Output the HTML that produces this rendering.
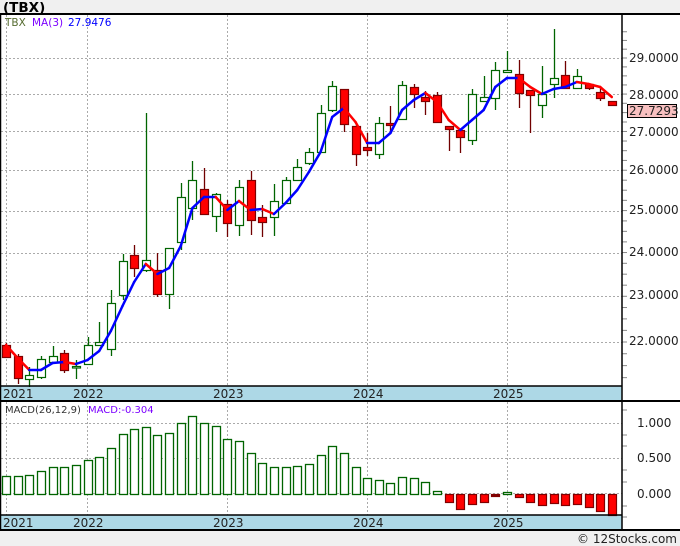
<!DOCTYPE html>
<html><head><meta charset="utf-8"><style>
html,body{margin:0;padding:0;background:#fff;width:680px;height:546px;overflow:hidden}
svg{display:block}
text{font-family:"DejaVu Sans","Liberation Sans",sans-serif;font-size:12px}
</style></head><body>
<svg id="s" width="680" height="546" viewBox="0 0 680 546" xmlns="http://www.w3.org/2000/svg">
<rect x="0" y="0" width="680" height="546" fill="#fff"/>
<rect x="0" y="0" width="680" height="14" fill="#f0f0f0"/>
<rect x="0" y="530" width="680" height="16" fill="#f0f0f0"/>
<g id="grid"></g>
<rect x="0" y="386" width="622" height="15" fill="#add8e6"/>
<rect x="0" y="515" width="622" height="15" fill="#add8e6"/>
<g id="plot"></g>
<line x1="0" y1="14" x2="680" y2="14" stroke="#000" stroke-width="2"/>
<line x1="0" y1="386" x2="622" y2="386" stroke="#000" stroke-width="1.5"/>
<line x1="0" y1="401" x2="680" y2="401" stroke="#000" stroke-width="2"/>
<line x1="0" y1="515" x2="622" y2="515" stroke="#000" stroke-width="1.5"/>
<line x1="0" y1="530" x2="680" y2="530" stroke="#000" stroke-width="2"/>
<line x1="0.5" y1="14" x2="0.5" y2="530" stroke="#000" stroke-width="1.5"/>
<line x1="622" y1="14" x2="622" y2="530" stroke="#000" stroke-width="1.5"/>
<text x="3" y="12" style="font-weight:bold;font-size:13.5px" fill="#000">(TBX)</text>
<text x="5" y="26" style="font-size:10.5px" fill="#556b2f">TBX</text>
<text x="32" y="26" style="font-size:10.5px" fill="#7b00ff">MA(3)</text>
<text x="68" y="26" style="font-size:10.5px" fill="#0000ff">27.9476</text>
<text x="5" y="413" style="font-size:10px" fill="#333">MACD(26,12,9)</text>
<text x="88" y="413" style="font-size:10px" fill="#7b00ff">MACD:-0.304</text>
<g fill="#222" style="font-size:12px">
<text x="629" y="62">29.0000</text>
<text x="629" y="99">28.0000</text>
<text x="629" y="174">26.0000</text>
<text x="629" y="214">25.0000</text>
<text x="629" y="256">24.0000</text>
<text x="629" y="299">23.0000</text>
<text x="629" y="345">22.0000</text>
<text x="637" y="427">1.000</text>
<text x="637" y="462">0.500</text>
<text x="637" y="498">0.000</text>
<text x="629" y="136">27.0000</text>
</g>
<rect x="627.5" y="104.5" width="49" height="13" fill="#f8c0c0" stroke="#000"/>
<text x="629" y="115" fill="#222" style="font-size:12px">27.7293</text>
<g fill="#222" style="font-size:12px">
<text x="3" y="398">2021</text><text x="73" y="398">2022</text><text x="213" y="398">2023</text><text x="353" y="398">2024</text><text x="493" y="398">2025</text>
<text x="3" y="527">2021</text><text x="73" y="527">2022</text><text x="213" y="527">2023</text><text x="353" y="527">2024</text><text x="493" y="527">2025</text>
</g>
<text x="677" y="543" text-anchor="end" fill="#222" style="font-size:12px">© 12Stocks.com</text>
</svg>
<script>
var NS="http://www.w3.org/2000/svg";
function el(p,t,a){var e=document.createElementNS(NS,t);for(var k in a)e.setAttribute(k,a[k]);p.appendChild(e);return e;}
var g=document.getElementById('grid'),p=document.getElementById('plot');
function Y(pr){return 58+1028*(Math.log(29)-Math.log(pr));}
[29,28,27,26,25,24,23,22].forEach(function(v){var y=Math.round(Y(v))+.5;el(g,'line',{x1:1,x2:622,y1:y,y2:y,stroke:'#aaa','stroke-dasharray':'2,2'});});
for(var v=21.25;v<=29.9;v+=0.25){var y=Y(v);if(y>16&&y<386)el(p,'line',{x1:622,x2:627,y1:y,y2:y,stroke:'#888'});}
[423,458,493].forEach(function(y){el(g,'line',{x1:1,x2:622,y1:y+.5,y2:y+.5,stroke:'#aaa','stroke-dasharray':'2,2'});});
[410,435,446,470,482,506,517].forEach(function(y){el(p,'line',{x1:622,x2:627,y1:y,y2:y,stroke:'#888'});});
[6,87,227,367,507].forEach(function(x){el(g,'line',{x1:x+.5,x2:x+.5,y1:15,y2:386,stroke:'#aaa','stroke-dasharray':'2,2'});el(g,'line',{x1:x+.5,x2:x+.5,y1:402,y2:515,stroke:'#aaa','stroke-dasharray':'2,2'});el(g,'line',{x1:x+.5,x2:x+.5,y1:386,y2:392,stroke:'#000'});el(g,'line',{x1:x+.5,x2:x+.5,y1:515,y2:521,stroke:'#000'});});
var C=[['r',345,357,343,358],['r',356,378,354,384],['g',375,379,367,387],['g',359,377,356,379],['g',356,362,346,364],['r',353,370,350,373],['g',366,367,360,379],['g',345,364,337,364],['g',342,345,322,346],['g',303,349,290,356],['g',261,295,254,300],['r',255,268,245,277],['g',260,270,113,272],['r',270,294,253,297],['g',248,294,248,309],['g',197,242,183,250],['g',180,208,161,220],['r',189,214,168,215],['g',194,216,193,232],['r',204,223,200,237],['g',187,225,180,236],['r',180,220,171,235],['r',217,222,205,237],['g',201,217,184,236],['g',180,203,177,203],['g',167,180,159,180],['g',152,163,148,165],['g',113,152,105,153],['g',86,110,81,112],['r',89,124,89,132],['r',126,154,125,166],['r',147,150,133,156],['g',123,154,117,159],['r',123,125,106,131],['g',85,119,81,120],['r',87,94,84,108],['r',97,101,91,115],['r',95,122,92,122],['r',126,129,126,151],['r',130,137,130,153],['g',94,140,89,145],['g',97,101,76,101],['g',70,98,62,110],['g',70,72,51,73],['r',74,93,60,108],['r',90,95,90,133],['g',94,105,66,118],['g',78,84,29,98],['r',75,88,61,88],['g',76,88,69,88],['r',84,88,83,90],['r',92,98,87,101],['r',101,105,101,106]];
function X(i){return 6+i*11.65;}
C.forEach(function(c,i){var x=Math.round(X(i));var col=c[0]=='g'?'#006400':'#700000';
el(p,'line',{x1:x+.5,x2:x+.5,y1:c[3],y2:c[4],stroke:col,'stroke-width':1.3});
el(p,'rect',{x:x-3.5,y:c[1]+.5,width:8,height:Math.max(c[2]-c[1],1.5),fill:c[0]=='g'?'#fff':'#f00',stroke:c[0]=='g'?'#006400':'#800000','stroke-width':1.2});});
var M=[345,358,370,370,363,362,364,360,351,331,306,282,264,274,268,246,208,197,197,210,201,210,209,214,203,190,172,152,117,108,122,143,143,133,110,100,93,102,120,130,120,110,87,78,78,87,94,89,87,82,84,87,97];
for(var i=0;i<M.length-1;i++){el(p,'line',{x1:X(i),y1:M[i],x2:X(i+1),y2:M[i+1],stroke:M[i+1]<=M[i]?'#0000ff':'#ff0000','stroke-width':2.5,'stroke-linecap':'round'});}
var H=[476,476,475,471,467,467,465,460,457,448,434,429,427,435,433,423,416,423,426,439,441,453,463,467,467,466,464,455,446,453,467,478,480,483,477,478,482,491,502,509,504,502,496,492,497,502,505,503,505,504,507,511,515];
H.forEach(function(h,i){var x=Math.round(X(i));if(h<494){el(p,'rect',{x:x-3.5,y:h+.5,width:8,height:494-h,fill:'#fff',stroke:'#006400','stroke-width':1.3});}else{var dark=i==42;el(p,'rect',{x:x-3.5,y:494.5,width:8,height:Math.max(h-494,1.5),fill:dark?'#800000':'#f00',stroke:'#800000','stroke-width':1.2});}});
</script>
</body></html>
